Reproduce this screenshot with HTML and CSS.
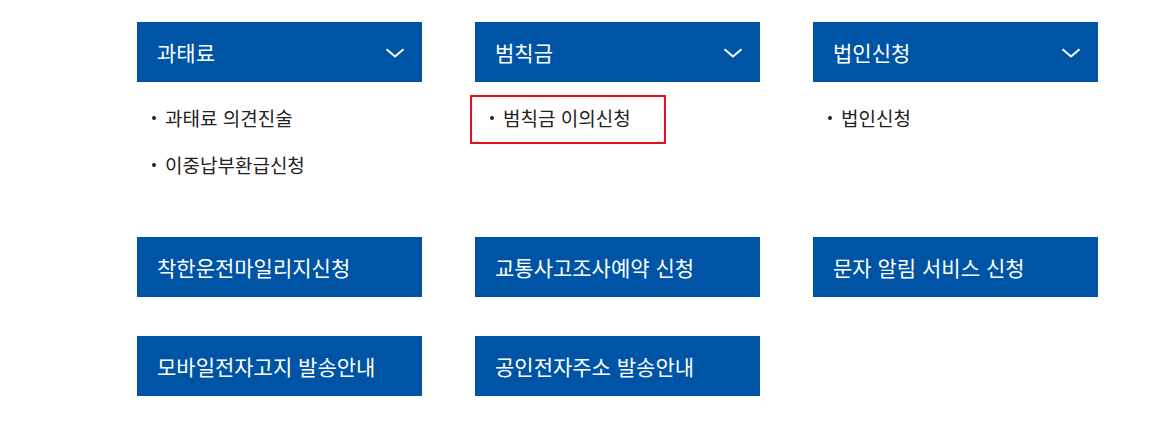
FILE: index.html
```html
<!DOCTYPE html>
<html lang="ko">
<head>
<meta charset="utf-8">
<title>신청 메뉴</title>
<link rel="stylesheet" href="styles.css">
</head>
<body>
<div class="menu">
  <div class="cell">
    <div class="head">
      <span>과태료</span>
      <svg class="chev" width="20" height="10" viewBox="0 0 20 10"><path d="M1.5 1.2 L10 8.5 L18.5 1.2" fill="none" stroke="#fff" stroke-width="2"/></svg>
    </div>
    <ul class="sub">
      <li class="sub-item">과태료 의견진술</li>
      <li class="sub-item">이중납부환급신청</li>
    </ul>
  </div>
  <div class="cell">
    <div class="head">
      <span>범칙금</span>
      <svg class="chev" width="20" height="10" viewBox="0 0 20 10"><path d="M1.5 1.2 L10 8.5 L18.5 1.2" fill="none" stroke="#fff" stroke-width="2"/></svg>
    </div>
    <ul class="sub">
      <li class="sub-item is-focused">범칙금 이의신청</li>
    </ul>
  </div>
  <div class="cell">
    <div class="head">
      <span>법인신청</span>
      <svg class="chev" width="20" height="10" viewBox="0 0 20 10"><path d="M1.5 1.2 L10 8.5 L18.5 1.2" fill="none" stroke="#fff" stroke-width="2"/></svg>
    </div>
    <ul class="sub">
      <li class="sub-item">법인신청</li>
    </ul>
  </div>
  <div class="head">착한운전마일리지신청</div>
  <div class="head">교통사고조사예약 신청</div>
  <div class="head">문자 알림 서비스 신청</div>
  <div class="head">모바일전자고지 발송안내</div>
  <div class="head">공인전자주소 발송안내</div>
</div>
</body>
</html>
```
FILE: styles.css
```css
html, body {
  margin: 0;
  padding: 0;
  background: #fff;
}
body {
  font-family: "Noto Sans CJK KR", "Noto Sans", sans-serif;
}
.menu {
  display: grid;
  grid-template-columns: repeat(3, 285px);
  column-gap: 53px;
  row-gap: 39px;
  padding: 22px 0 0 137px;
  align-items: start;
}
.head {
  height: 60px;
  background: #0054a6;
  color: #fff;
  font-size: 21px;
  font-weight: 400;
  display: flex;
  align-items: center;
  justify-content: space-between;
  padding: 0 17px 0 20px;
  box-sizing: border-box;
}
.chev {
  display: block;
  margin-top: 2px;
}
.sub {
  list-style: none;
  margin: 0;
  padding: 22px 0 19px 0;
}
.sub-item {
  position: relative;
  font-size: 19px;
  line-height: 28px;
  color: #222;
  padding-left: 28px;
  margin-bottom: 19px;
}
.sub-item:last-child {
  margin-bottom: 0;
}
.sub-item::before {
  content: "";
  position: absolute;
  left: 15px;
  top: 12px;
  width: 4px;
  height: 4px;
  border-radius: 50%;
  background: #222;
}
.sub-item.is-focused::after {
  content: "";
  position: absolute;
  left: -5px;
  top: -9px;
  width: 196px;
  height: 49px;
  border: 2px solid #e8101a;
  box-sizing: border-box;
}
```
